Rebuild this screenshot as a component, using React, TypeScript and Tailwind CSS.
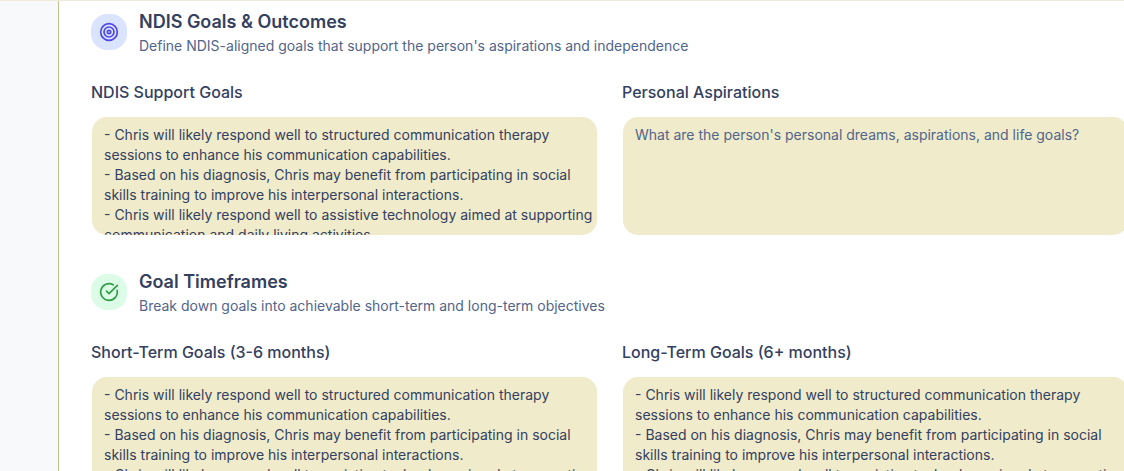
import { useId, type ReactNode } from "react";
import { CircleCheckBig, Target } from "lucide-react";

const goals = `- Chris will likely respond well to structured communication therapy sessions to enhance his communication capabilities.
- Based on his diagnosis, Chris may benefit from participating in social skills training to improve his interpersonal interactions.
- Chris will likely respond well to assistive technology aimed at supporting communication and daily living activities.`;

function Field({ label, value, placeholder }: { label: string; value?: string; placeholder?: string }) {
  const id = useId();
  return (
    <div className="flex flex-col gap-3">
      <label htmlFor={id} className="text-base font-medium text-[#334060]">
        {label}
      </label>
      <textarea
        id={id}
        defaultValue={value}
        placeholder={placeholder}
        className="block h-30 w-full resize-none rounded-2xl border border-transparent bg-[#f0ebcb] bg-clip-padding py-2 pr-1 pl-3 text-sm text-[#334060] outline-none [scrollbar-width:none] placeholder:text-[#52658a]"
      />
    </div>
  );
}

function Section({
  icon,
  tint,
  title,
  description,
  children,
}: {
  icon: ReactNode;
  tint: string;
  title: string;
  description: string;
  children: ReactNode;
}) {
  return (
    <section className="flex flex-col gap-6">
      <header className="flex items-center gap-3">
        <div className={`rounded-2xl p-2 ${tint}`}>{icon}</div>
        <div>
          <h3 className="text-lg font-semibold text-[#334060]">{title}</h3>
          <p className="text-sm text-[#52658a]">{description}</p>
        </div>
      </header>
      <div className="grid grid-cols-2 gap-6">{children}</div>
    </section>
  );
}

export default function App() {
  return (
    <div className="flex h-screen flex-col overflow-hidden border-t border-[#edeadb] bg-[#f7f9fb] font-['Inter',sans-serif]">
      <main className="-mr-[5px] ml-[58px] flex grow flex-col gap-8 border-l border-[#c9c08f] bg-white pt-[7px] pl-8">
        <Section
          icon={<Target className="size-5 text-[#4f46e5]" />}
          tint="bg-[#dbe4fe]"
          title="NDIS Goals & Outcomes"
          description="Define NDIS-aligned goals that support the person's aspirations and independence"
        >
          <Field label="NDIS Support Goals" value={goals} />
          <Field
            label="Personal Aspirations"
            placeholder="What are the person's personal dreams, aspirations, and life goals?"
          />
        </Section>
        <Section
          icon={<CircleCheckBig className="size-5 text-[#2f9e44]" />}
          tint="bg-[#dcfce7]"
          title="Goal Timeframes"
          description="Break down goals into achievable short-term and long-term objectives"
        >
          <Field label="Short-Term Goals (3-6 months)" value={goals} />
          <Field label="Long-Term Goals (6+ months)" value={goals} />
        </Section>
      </main>
    </div>
  );
}
